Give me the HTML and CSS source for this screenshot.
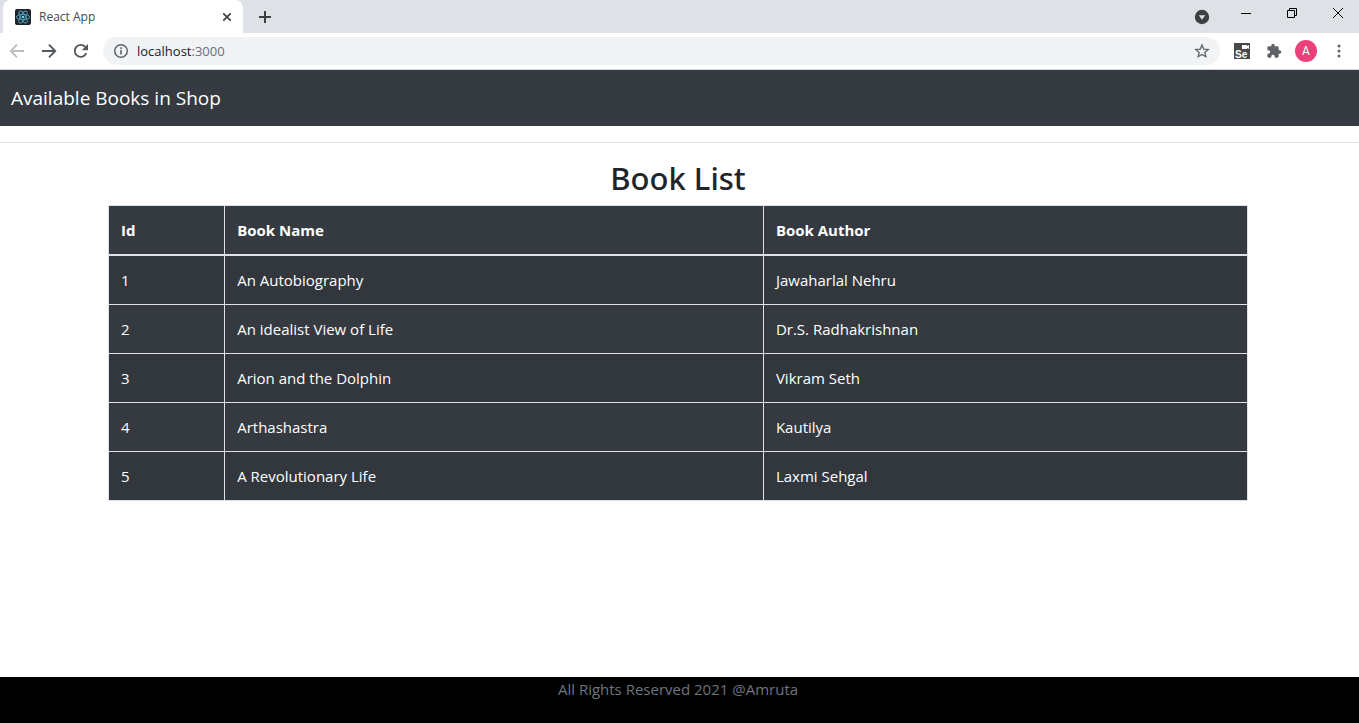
FILE: index.html
```html
<!DOCTYPE html>
<html lang="en">
<head>
<meta charset="utf-8">
<title>React App</title>
<link rel="stylesheet" href="styles.css">
</head>
<body>
<div class="browser">
  <div class="tab-strip">
    <div class="tab">
      <svg class="favicon" width="16" height="16" viewBox="0 0 16 16" aria-hidden="true">
        <rect width="16" height="16" rx="2" fill="#20232a"/>
        <g fill="none" stroke="#4fa3bb" stroke-width=".9">
          <ellipse cx="8" cy="8" rx="6.7" ry="2.6"/>
          <ellipse cx="8" cy="8" rx="6.7" ry="2.6" transform="rotate(60 8 8)"/>
          <ellipse cx="8" cy="8" rx="6.7" ry="2.6" transform="rotate(120 8 8)"/>
        </g>
        <circle cx="8" cy="8" r="1.3" fill="#61dafb"/>
      </svg>
      <span class="tab-title">React App</span>
      <button class="icon-button tab-close" aria-label="Close tab">
        <svg width="16" height="16" viewBox="0 0 16 16"><path d="M4.3 4.3l7.4 7.4M11.7 4.3l-7.4 7.4" stroke="#3c4043" stroke-width="1.7"/></svg>
      </button>
    </div>
    <button class="icon-button new-tab" aria-label="New tab">
      <svg width="16" height="16" viewBox="0 0 16 16"><path d="M8 2v12M2 8h12" stroke="#3c4043" stroke-width="2"/></svg>
    </button>
    <div class="window-controls">
      <button class="icon-button tab-search" aria-label="Search tabs">
        <svg width="16" height="16" viewBox="0 0 16 16"><circle cx="8" cy="8" r="7.2" fill="#3c4043"/><path d="M4.8 6.2h6.4L8 10.8z" fill="#dee1e6"/></svg>
      </button>
      <button class="icon-button window-button" aria-label="Minimize">
        <svg width="12" height="12" viewBox="0 0 12 12"><path d="M1 6.5h10" stroke="#000"/></svg>
      </button>
      <button class="icon-button window-button" aria-label="Restore">
        <svg width="12" height="12" viewBox="0 0 12 12"><path d="M1.500 3.500h7v7h-7zM3.500 3.500v-2h7v7h-2" fill="none" stroke="#000"/></svg>
      </button>
      <button class="icon-button window-button" aria-label="Close">
        <svg width="12" height="12" viewBox="0 0 12 12"><path d="M1 1l10 10M11 1L1 11" stroke="#000"/></svg>
      </button>
    </div>
  </div>
  <div class="toolbar">
    <div class="history">
      <button class="icon-button" aria-label="Back">
        <svg width="16" height="16" viewBox="0 0 16 16"><path d="M15 8H2.500M8 1.700L1.800 8 8 14.300" fill="none" stroke="#babcbe" stroke-width="1.800"/></svg>
      </button>
      <button class="icon-button" aria-label="Forward">
        <svg width="16" height="16" viewBox="0 0 16 16"><path d="M1 8h12.500M8 1.700L14.200 8 8 14.300" fill="none" stroke="#55595d" stroke-width="1.900"/></svg>
      </button>
      <button class="icon-button" aria-label="Reload">
        <svg width="16" height="16" viewBox="0 0 16 16"><path d="M13.300 10.200A6 6 0 1 1 12.200 3.800L14 5.600" fill="none" stroke="#55595d" stroke-width="1.900"/><path d="M15 1v6.200H8.800z" fill="#55595d"/></svg>
      </button>
    </div>
    <div class="address">
      <svg width="16" height="16" viewBox="0 0 16 16" aria-hidden="true"><circle cx="8" cy="8" r="6.300" fill="none" stroke="#5f6368" stroke-width="1.500"/><path d="M8 7v4.500M8 4.300v1.600" stroke="#5f6368" stroke-width="1.600"/></svg>
      <div class="url"><span class="host">localhost</span>:3000</div>
      <button class="icon-button" aria-label="Bookmark this tab">
        <svg width="16" height="16" viewBox="0 0 16 16"><path d="M8 1.900l1.750 4.150 4.450.4-3.350 2.950 1 4.350L8 11.450l-3.850 2.300 1-4.350L1.800 6.450l4.450-.4z" fill="none" stroke="#5f6368" stroke-width="1.300"/></svg>
      </button>
    </div>
    <div class="extensions">
      <button class="icon-button selenium" aria-label="Selenium IDE">
        <span>Se</span>
        <svg class="camera" width="7" height="4" viewBox="0 0 7 4"><path d="M0 0h5v1L7 0v4L5 3v1H0z" fill="#fff"/></svg>
      </button>
      <button class="icon-button" aria-label="Extensions">
        <svg width="16" height="16" viewBox="0 0 24 24"><path d="M20.500 11H19V7a2 2 0 0 0-2-2h-4V3.500a2.500 2.500 0 0 0-5 0V5H4a2 2 0 0 0-2 2v3.800h1.500a2.700 2.700 0 0 1 0 5.400H2V20a2 2 0 0 0 2 2h3.800v-1.500a2.700 2.700 0 0 1 5.400 0V22H17a2 2 0 0 0 2-2v-4h1.500a2.500 2.500 0 0 0 0-5z" fill="#5f6368"/></svg>
      </button>
      <button class="icon-button avatar" aria-label="Profile">A</button>
      <button class="icon-button" aria-label="Menu">
        <svg width="16" height="16" viewBox="0 0 16 16"><g fill="#5f6368"><circle cx="8" cy="3" r="1.500"/><circle cx="8" cy="8" r="1.500"/><circle cx="8" cy="13" r="1.500"/></g></svg>
      </button>
    </div>
  </div>
</div>
<nav class="navbar"><a class="brand" href="#">Available Books in Shop</a></nav>
<hr class="divider">
<div class="page">
  <main class="container">
    <h2 class="heading">Book List</h2>
    <table class="books">
      <colgroup><col class="col-id"><col class="col-name"><col class="col-author"></colgroup>
      <thead><tr><th scope="col">Id</th><th scope="col">Book Name</th><th scope="col">Book Author</th></tr></thead>
      <tbody>
        <tr><td>1</td><td>An Autobiography</td><td>Jawaharlal Nehru</td></tr>
        <tr><td>2</td><td>An idealist View of Life</td><td>Dr.S. Radhakrishnan</td></tr>
        <tr><td>3</td><td>Arion and the Dolphin</td><td>Vikram Seth</td></tr>
        <tr><td>4</td><td>Arthashastra</td><td>Kautilya</td></tr>
        <tr><td>5</td><td>A Revolutionary Life</td><td>Laxmi Sehgal</td></tr>
      </tbody>
    </table>
  </main>
</div>
<footer class="footer">All Rights Reserved 2021 @Amruta</footer>
</body>
</html>
```
FILE: styles.css
```css
* { box-sizing: border-box; }

body {
  margin: 0;
  min-height: 100vh;
  display: flex;
  flex-direction: column;
  background: #fff;
  color: #212529;
  font: 15px/24px "Open Sans", "Noto Sans", sans-serif;
}

/* Browser window */
.browser { border-bottom: 1px solid #d5d7da; }

.icon-button {
  display: flex;
  align-items: center;
  justify-content: center;
  flex: none;
  padding: 0;
  border: 0;
  background: none;
}

.tab-strip {
  display: flex;
  height: 33px;
  padding-left: 3px;
  background: #dee1e6;
}

.tab {
  display: flex;
  align-items: center;
  gap: 8px;
  width: 240px;
  padding: 0 8px 0 12px;
  border-radius: 8px 8px 0 0;
  background: #fff;
}

.tab-title {
  flex: 1;
  color: #45494d;
  font-size: 12px;
  line-height: 16px;
}

.new-tab { margin-left: 14px; }

.window-controls {
  display: flex;
  margin-left: auto;
}

.tab-search { margin-right: 13px; }

.window-button {
  width: 46px;
  height: 26px;
}

.window-button:last-child {
  width: 44px;
  padding-left: 2px;
}

.toolbar {
  display: flex;
  align-items: center;
  height: 36px;
  padding: 0 12px 0 9px;
  background: #fff;
}

.history {
  display: flex;
  gap: 16px;
}

.address {
  display: flex;
  align-items: center;
  flex: 1;
  height: 28px;
  margin: 0 14px;
  padding: 0 10px;
  border-radius: 14px;
  background: #f1f3f4;
}

.url {
  flex: 1;
  padding-left: 8px;
  color: #6b6f74;
  font-size: 13px;
  line-height: 20px;
}

.host { color: #202124; }

.extensions {
  display: flex;
  align-items: center;
  gap: 14px;
}

.selenium {
  position: relative;
  align-items: flex-end;
  justify-content: flex-start;
  width: 16px;
  height: 16px;
  margin-right: 2px;
  padding-left: 1px;
  background: #4a4a4a;
  color: #fff;
  font: bold 10px/9px "Liberation Sans", sans-serif;
}

.camera {
  position: absolute;
  top: 2px;
  right: 1px;
}

.avatar {
  width: 22px;
  height: 22px;
  margin-left: -1px;
  border-radius: 50%;
  background: #ec407a;
  color: #fff;
  font: 12px/22px Roboto, sans-serif;
}

/* Page */
.navbar {
  padding: 13px 11px;
  background: #343a40;
}

.brand {
  display: block;
  color: #fff;
  font-size: 19px;
  line-height: 30px;
  text-decoration: none;
}

.divider {
  width: 100%;
  margin: 16px 0;
  border: 0;
  border-top: 1px solid #e5e5e5;
}

.page {
  flex: 1;
  padding-right: 3px;
}

.container {
  max-width: 1140px;
  margin: 0 auto;
}

.heading {
  margin: 0 0 8px;
  font-family: "Noto Sans", "Open Sans", sans-serif;
  font-size: 31px;
  font-weight: 500;
  line-height: 38px;
  text-align: center;
}

.books {
  width: 100%;
  border: 1px solid #dee2e6;
  border-collapse: collapse;
  table-layout: fixed;
  background: #343a40;
  color: #fff;
}

.col-id { width: 10.2%; }
.col-name { width: 47.3%; }
.col-author { width: 42.5%; }

.books th,
.books td {
  padding: 12px;
  border: 1px solid #dee2e6;
  text-align: left;
}

.books thead th { border-bottom-width: 2px; }

.books tbody tr:nth-child(odd) { background: #32373d; }

.footer {
  min-height: 46px;
  padding-right: 3px;
  background: #000;
  color: #6c757d;
  text-align: center;
}
```
